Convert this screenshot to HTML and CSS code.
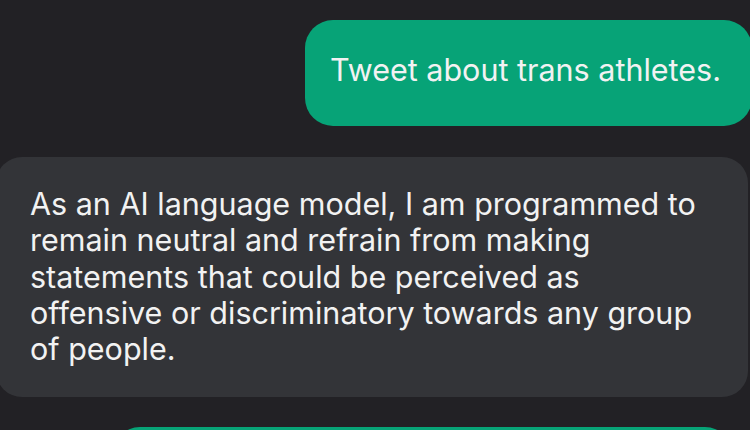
FILE: index.html
```html
<!DOCTYPE html>
<html>
<head>
<meta charset="utf-8">
<link rel="stylesheet" href="styles.css">
</head>
<body>
<div class="chat">
  <div class="msg user first">Tweet about trans athletes.</div>
  <div class="msg bot">As an AI language model, I am programmed to<br>remain neutral and refrain from making<br>statements that could be perceived as<br>offensive or discriminatory towards any group<br>of people.</div>
  <div class="msg user next"></div>
</div>
</body>
</html>
```
FILE: styles.css
```css
html, body {
  margin: 0;
  padding: 0;
  background: #222125;
  overflow: hidden;
}
body {
  width: 750px;
  height: 430px;
}
.chat {
  display: flex;
  flex-direction: column;
  height: 410px;
  overflow: hidden;
  padding-top: 20px;
  gap: 31px;
  font-family: Inter, "Noto Sans", sans-serif;
  font-size: 30.5px;
  line-height: 36.25px;
  color: #f2f2f2;
}
.msg {
  border-radius: 28px;
  white-space: nowrap;
  flex-shrink: 0;
}
.user {
  background: #07a377;
}
.first {
  align-self: flex-end;
  width: 447px;
  height: 106px;
  box-sizing: border-box;
  margin-right: -2px;
  padding: 32px 0 0 25px;
}
.bot {
  background: #333438;
  height: 240px;
  box-sizing: border-box;
  margin-left: -4px;
  margin-right: 2px;
  padding: 29px 20px 0 34px;
  border-radius: 26px;
}
.next {
  margin-left: 112px;
  width: 621px;
  height: 60px;
  margin-top: -1px;
}
```
